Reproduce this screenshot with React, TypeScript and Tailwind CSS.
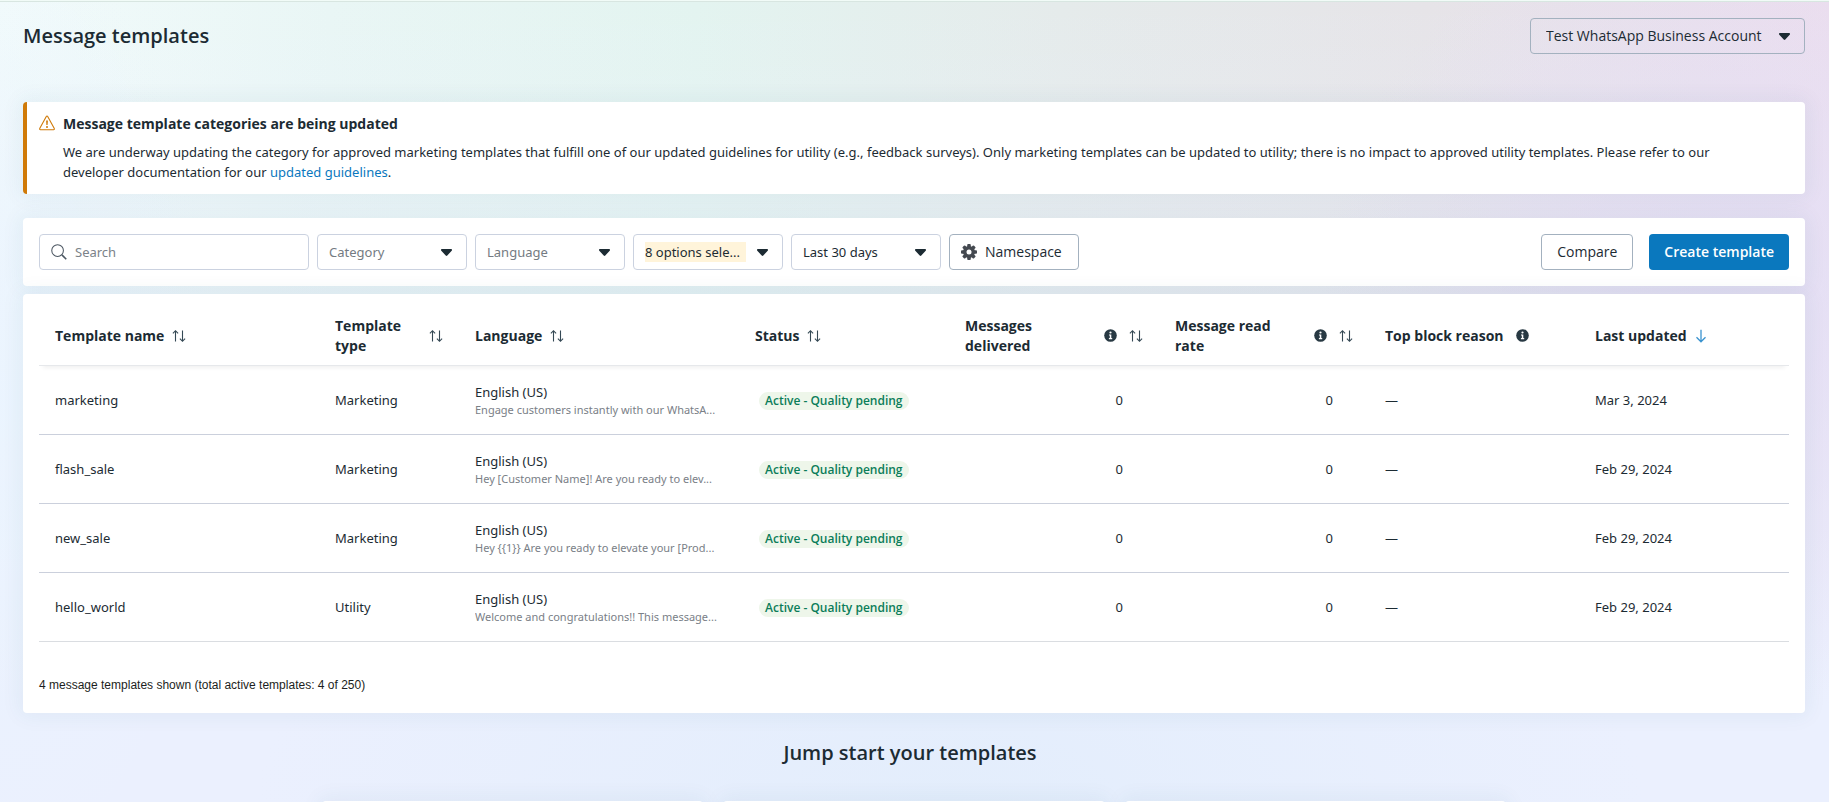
import type { ReactNode } from "react";

type Template = {
  name: string;
  type: string;
  preview: string;
  updated: string;
};

const templates: Template[] = [
  { name: "marketing", type: "Marketing", preview: "Engage customers instantly with our WhatsA...", updated: "Mar 3, 2024" },
  { name: "flash_sale", type: "Marketing", preview: "Hey [Customer Name]! Are you ready to elev...", updated: "Feb 29, 2024" },
  { name: "new_sale", type: "Marketing", preview: "Hey {{1}} Are you ready to elevate your [Prod...", updated: "Feb 29, 2024" },
  { name: "hello_world", type: "Utility", preview: "Welcome and congratulations!! This message...", updated: "Feb 29, 2024" },
];

function Caret() {
  return (
    <svg className="pointer-events-none h-[7px] w-[11px] shrink-0" viewBox="0 0 11 7" fill="#1c2b33" aria-hidden="true">
      <path d="M1 0h9c.9 0 1.3 1 .7 1.7L6.3 6.5c-.4.5-1.200.5-1.600 0L.3 1.700C-.3 1 .1 0 1 0Z" />
    </svg>
  );
}

function SortIcon() {
  return (
    <svg className="h-3.5 w-3.5 shrink-0" viewBox="0 0 14 14" fill="none" stroke="#344854" strokeWidth="1.1" aria-hidden="true">
      <path d="M3.500 12.600V2M.9 4.400l2.600-2.700 2.600 2.700M10.500 1.400V12M7.900 9.600l2.600 2.700 2.600-2.700" />
    </svg>
  );
}

function InfoIcon() {
  return (
    <svg className="h-[13px] w-[13px] shrink-0" viewBox="0 0 13 13" aria-hidden="true">
      <circle cx="6.5" cy="6.5" r="6.300" fill="#283943" />
      <circle cx="6.500" cy="3.500" r="1.100" fill="#fff" />
      <path d="M5 5.500h2.300v3.600h.9v1.100H4.900V9.100h.9V6.600H5Z" fill="#fff" />
    </svg>
  );
}

function DownArrow() {
  return (
    <svg className="h-3.5 w-3 shrink-0" viewBox="0 0 12 14" fill="none" stroke="#3a93cf" strokeWidth="1.3" aria-hidden="true">
      <path d="M6 .8v11.800M1.500 8.300 6 12.800l4.500-4.500" />
    </svg>
  );
}

function WarningIcon() {
  return (
    <svg className="mt-px h-4 w-4 shrink-0" viewBox="0 0 16 16" fill="none" aria-hidden="true">
      <path d="M7.300 1.400a.8.8 0 0 1 1.400 0l6.600 12.100a.8.8 0 0 1-.7 1.200H1.400a.8.8 0 0 1-.7-1.200Z" stroke="#d07a08" strokeWidth="1.100" />
      <path d="M7.100 5.500h1.800l-.3 4.500H7.400Z" fill="#d07a08" />
      <circle cx="8" cy="12" r="1" fill="#d07a08" />
    </svg>
  );
}

function SearchIcon() {
  return (
    <svg className="h-4 w-4 shrink-0" viewBox="0 0 17 17" fill="none" stroke="#4b5661" aria-hidden="true">
      <circle cx="7" cy="7" r="6.200" strokeWidth="1.100" />
      <path d="m11.600 11.600 4.600 4.600" strokeWidth="1.700" />
    </svg>
  );
}

function GearIcon() {
  return (
    <svg className="h-4 w-4 shrink-0" viewBox="0 0 16 16" aria-hidden="true">
      <g fill="#444950">
        <rect x="6.200" y="0" width="3.600" height="16" rx="1" />
        <rect x="6.200" y="0" width="3.600" height="16" rx="1" transform="rotate(45 8 8)" />
        <rect x="6.200" y="0" width="3.600" height="16" rx="1" transform="rotate(90 8 8)" />
        <rect x="6.200" y="0" width="3.600" height="16" rx="1" transform="rotate(135 8 8)" />
        <circle cx="8" cy="8" r="6" />
      </g>
      <circle cx="8" cy="8" r="2.500" fill="#fff" />
    </svg>
  );
}

function FilterSelect({ label, value, tone }: { label: string; value: string; tone: string }) {
  return (
    <div className="flex h-9 w-[150px] items-center gap-[11px] rounded border border-[#cbd2e0] bg-white pr-3.5 pl-[11px]">
      <select aria-label={label} className={"h-5 min-w-0 flex-1 cursor-pointer appearance-none text-[13px] leading-5 outline-none " + tone}>
        <option>{value}</option>
      </select>
      <Caret />
    </div>
  );
}

function HeaderCell({ label, width, info, children }: { label: string; width: string; info?: boolean; children?: ReactNode }) {
  return (
    <th scope="col" className={"h-14 border-b border-[#e6e8eb] px-4 pb-1 text-left align-middle " + width}>
      <div className={"flex items-center " + (info ? "gap-3" : "gap-2")}>
        <span className="font-['Open_Sans',sans-serif] text-sm leading-5 font-bold">{label}</span>
        {info && <InfoIcon />}
        {children && <span className={info ? "ml-auto" : ""}>{children}</span>}
      </div>
    </th>
  );
}

const cell = "h-[69px] border-b border-[#cbd0dc] px-4 align-middle group-last:border-[#dadde1]";
const card = "rounded bg-white shadow-[0_0_20px_4px_rgba(40,90,110,0.055)]";
const button = "flex h-9 items-center rounded border border-[#a3b1bf] bg-white font-['Open_Sans',sans-serif] text-sm";

export default function App() {
  return (
    <div className="flex h-screen flex-col overflow-hidden bg-[radial-gradient(ellipse_38%_40%_at_52%_100%,#dfecfbaa,#dfecfb00),radial-gradient(ellipse_12%_60%_at_0%_50%,#eaf4ffcc,#eaf4ff00),radial-gradient(ellipse_22%_50%_at_94%_38%,#e2dcf4cc,#e2dcf400),linear-gradient(to_bottom,#ebf0fe00,#ebf0fe_88%),linear-gradient(to_right,#f2fbfb,#e9f6f5_18%,#e3f4f0_38%,#e5ebeb_58%,#e6e4e8_78%,#ecdeee)] font-['Noto_Sans',sans-serif] text-[13px] leading-5 text-[#1c2b33]">
      <div className="h-0.5 shrink-0 border-b border-[#8ea89f]/25 bg-[#f1fbf7]" />

      <div className="flex flex-col pt-4 pr-6 pl-[23px]">
        <header className="mb-12 flex h-9 items-center justify-between">
          <h1 className="font-['Open_Sans',sans-serif] text-xl leading-7 font-semibold">Message templates</h1>
          <div className="flex h-9 w-[275px] items-center gap-3 rounded border border-[#a3b1bf] pr-3.5 pl-[15px] font-['Open_Sans',sans-serif]">
            <select aria-label="Business account" className="h-5 min-w-0 flex-1 cursor-pointer appearance-none text-sm leading-5 outline-none">
              <option>Test WhatsApp Business Account</option>
            </select>
            <Caret />
          </div>
        </header>

        <section className={"mb-6 flex gap-2 border-l-4 border-[#d07a08] py-3 pr-16 pl-3 " + card}>
          <WarningIcon />
          <div>
            <h2 className="font-['Open_Sans',sans-serif] text-sm leading-5 font-bold">Message template categories are being updated</h2>
            <p className="mt-2">
              We are underway updating the category for approved marketing templates that fulfill one of our updated guidelines for utility (e.g., feedback surveys). Only marketing templates can be updated to utility; there is no impact to approved utility templates. Please refer to our developer documentation for our{" "}
              <a href="#guidelines" className="text-[#0a78be]">updated guidelines</a>.
            </p>
          </div>
        </section>

        <section className={"flex items-center gap-2 p-4 " + card}>
          <div className="flex h-9 w-[270px] items-center gap-2 rounded border border-[#cbd2e0] px-[11px]">
            <SearchIcon />
            <input type="text" aria-label="Search" placeholder="Search" className="min-w-0 flex-1 text-[13px] leading-5 outline-none placeholder:text-[#7b8289]" />
          </div>
          <FilterSelect label="Category" value="Category" tone="text-[#747b82]" />
          <FilterSelect label="Language" value="Language" tone="text-[#747b82]" />
          <FilterSelect label="Status" value="8 options sele..." tone="bg-[#fff4da]" />
          <FilterSelect label="Date range" value="Last 30 days" tone="bg-white" />
          <button type="button" className={button + " gap-2 pr-4 pl-[11px]"}>
            <GearIcon />
            Namespace
          </button>
          <div className="ml-auto flex gap-4">
            <button type="button" className={button + " px-[15px]"}>Compare</button>
            <button type="button" className="h-9 rounded bg-[#0a78be] px-[15px] font-['Open_Sans',sans-serif] text-sm font-semibold text-white">Create template</button>
          </div>
        </section>

        <section className={"mt-2 px-4 pt-4 pb-5 " + card}>
          <table className="w-full table-fixed border-separate border-spacing-0">
            <thead className="shadow-[0_6px_4px_-4px_rgba(0,0,0,0.06)]">
              <tr>
                <HeaderCell label="Template name" width="w-[16%]"><SortIcon /></HeaderCell>
                <HeaderCell label="Template type" width="w-[8%]"><SortIcon /></HeaderCell>
                <HeaderCell label="Language" width="w-[16%]"><SortIcon /></HeaderCell>
                <HeaderCell label="Status" width="w-[12%]"><SortIcon /></HeaderCell>
                <HeaderCell label="Messages delivered" width="w-[12%]" info><SortIcon /></HeaderCell>
                <HeaderCell label="Message read rate" width="w-[12%]" info><SortIcon /></HeaderCell>
                <HeaderCell label="Top block reason" width="w-[12%]" info />
                <HeaderCell label="Last updated" width="w-[12%]"><DownArrow /></HeaderCell>
              </tr>
            </thead>
            <tbody>
              {templates.map((t) => (
                <tr key={t.name} className="group">
                  <td className={cell}>{t.name}</td>
                  <td className={cell}>{t.type}</td>
                  <td className={cell}>
                    <div>English (US)</div>
                    <div className="truncate text-[11px] leading-4 text-[#7a8087]">{t.preview}</div>
                  </td>
                  <td className={cell}>
                    <span className="ml-1 inline-block rounded-full bg-[#eef6ea] px-1.5 font-['Open_Sans',sans-serif] text-xs leading-[18px] font-semibold text-[#0b7d59]">
                      Active - Quality pending
                    </span>
                  </td>
                  <td className={cell}><div className="pr-5 text-right">0</div></td>
                  <td className={cell}><div className="pr-5 text-right">0</div></td>
                  <td className={cell}>—</td>
                  <td className={cell}>{t.updated}</td>
                </tr>
              ))}
            </tbody>
          </table>
          <p className="mt-[35px] font-['Liberation_Sans',sans-serif] text-xs leading-4 text-[#1c1e21]">
            4 message templates shown (total active templates: 4 of 250)
          </p>
        </section>

        <section className="mt-6">
          <h2 className="mb-8 pr-2 text-center font-['Open_Sans',sans-serif] text-xl leading-8 font-semibold">Jump start your templates</h2>
          <div className="mx-auto grid max-w-[1184px] grid-cols-3 gap-5">
            <div className={"h-48 " + card} />
            <div className={"h-48 " + card} />
            <div className={"h-48 " + card} />
          </div>
        </section>
      </div>
    </div>
  );
}
